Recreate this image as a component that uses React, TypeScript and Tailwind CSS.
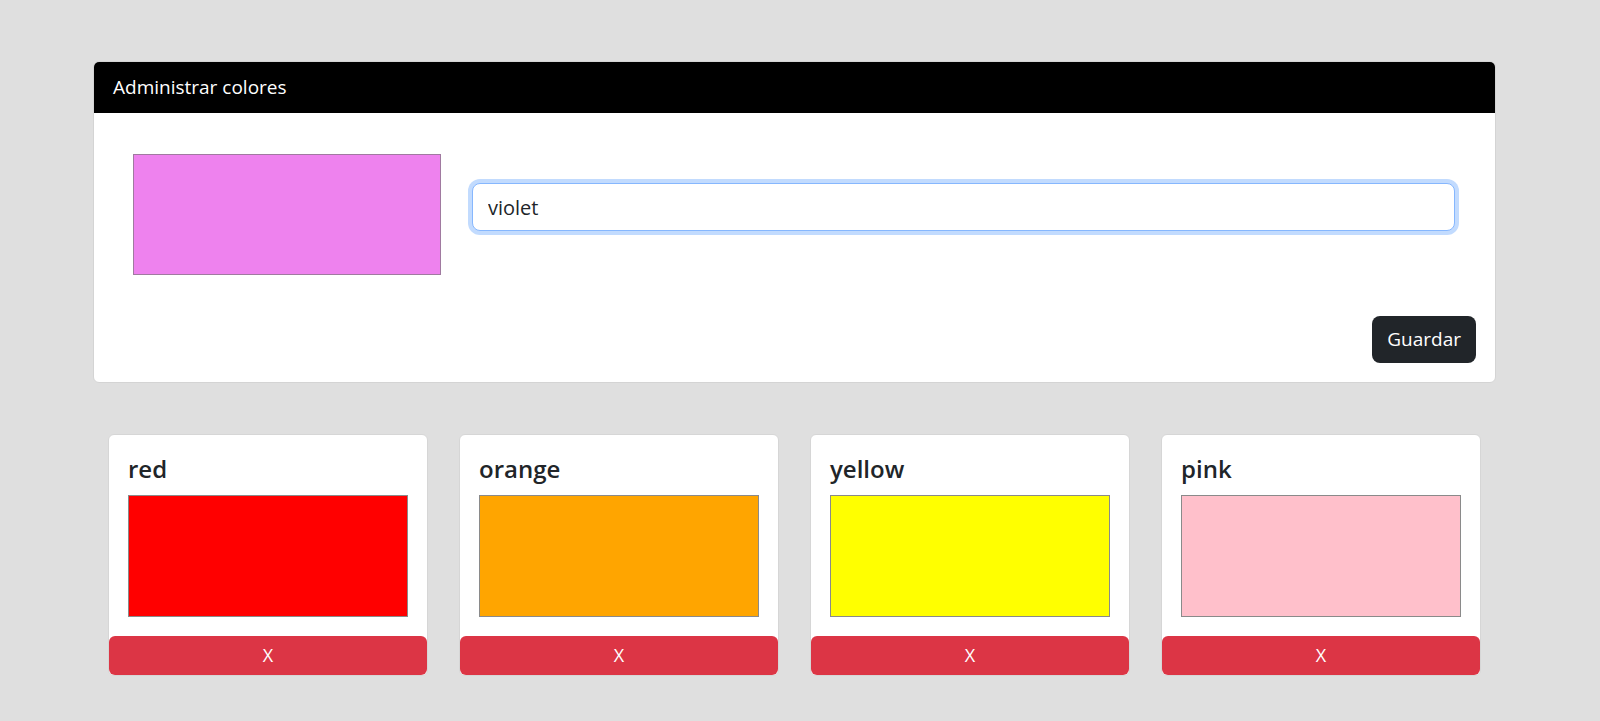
const colors = ["red", "orange", "yellow", "pink"];

const swatchBg: Record<string, string> = {
  red: "bg-[#ff0000]",
  orange: "bg-[#ffa500]",
  yellow: "bg-[#ffff00]",
  pink: "bg-[#ffc0cb]",
};

const ColorCard = ({ name }: { name: string }) => {
  return (
    <div className="w-[320px] flex flex-col bg-white border border-[#d6d6d6] rounded-[6px]">
      <div className="px-[19px] pt-[19px] pb-[19px]">
        <h4 className="text-[24px] leading-[29px] font-semibold text-[#212529] mb-[12px]">
          {name}
        </h4>
        <div className={`w-[280px] h-[122px] border border-[#8a8a8a] ${swatchBg[name]}`}></div>
      </div>
      <button className="h-[39px] w-full bg-[#dc3545] text-white text-[18px] rounded-[6px]">
        X
      </button>
    </div>
  );
};

export default function App() {
  return (
    <div
      className="min-h-[721px] w-full bg-[#dfdfdf] pt-[61px]"
      style={{ fontFamily: '"Open Sans", "Noto Sans", sans-serif' }}
    >
      {/* Admin card */}
      <div className="ml-[93px] w-[1403px] bg-white border border-[#d4d4d4] rounded-[6px] overflow-hidden">
        <div className="h-[51px] bg-black text-white text-[19px] flex items-center px-[19px]">
          Administrar colores
        </div>
        <div className="px-[19px] pt-[41px] pb-[19px]">
          <div className="flex items-start">
            <div className="ml-[20px] w-[308px] h-[121px] bg-[#ee82ee] border border-[#a07aa0]"></div>
            <div className="flex-1 ml-[31px] mr-[21px] mt-[29px]">
              <input
                type="text"
                defaultValue="violet"
                className="w-full h-[48px] px-[15px] text-[20px] text-[#212529] bg-white border border-[#86b7fe] rounded-[8px] outline-none shadow-[0_0_0_4px_rgba(13,110,253,0.25)]"
              />
            </div>
          </div>
          <div className="flex justify-end mt-[41px]">
            <button className="h-[47px] px-[15px] bg-[#212529] text-white text-[19px] rounded-[8px]">
              Guardar
            </button>
          </div>
        </div>
      </div>

      {/* Color list */}
      <div className="ml-[108px] mt-[51px] flex gap-[31px]">
        {colors.map((c) => (
          <ColorCard key={c} name={c} />
        ))}
      </div>
    </div>
  );
}
